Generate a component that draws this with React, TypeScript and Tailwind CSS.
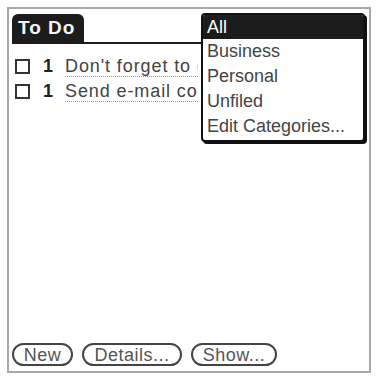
import React from 'react';

const todos = [
  { priority: 1, text: "Don't forget to call home" },
  { priority: 1, text: 'Send e-mail confirmation' },
];

const categories = ['Business', 'Personal', 'Unfiled', 'Edit Categories...'];

const App: React.FC = () => {
  return (
    <div
      className="relative w-[376px] h-[376px] bg-white pt-[7px] pl-[7px]"
      style={{ fontFamily: '"Liberation Sans", Arial, sans-serif' }}
    >
      <div className="w-[364px] h-[366px] border-2 border-[#a8a8a8] flex flex-col">
        {/* Title bar */}
        <div className="mt-[5px] ml-[3px] mr-[4px] flex items-end border-b-2 border-[#1c1c1c]">
          <div className="w-[72px] h-[28px] bg-[#1c1c1c] rounded-t-[6px] text-[#f4f4f4] text-[19px] font-bold pl-[6px] leading-[28px] tracking-[1px]">
            To Do
          </div>
        </div>

        {/* Rows */}
        <div className="mt-[10px] flex flex-col">
          {todos.map((t, i) => (
            <div key={i} className="flex items-center h-[25px] ml-[6px]">
              <div className="w-[15px] h-[15px] border-2 border-[#333] shrink-0" />
              <span className="ml-[13px] w-[12px] text-[18px] font-bold text-[#222]">{t.priority}</span>
              <span className="ml-[10px] w-[133px] overflow-hidden text-[18px] text-[#444] whitespace-nowrap border-b border-dotted border-[#999] leading-[20px] tracking-[0.9px]">
                {t.text}
              </span>
            </div>
          ))}
        </div>

        <div className="flex-1" />

        {/* Buttons */}
        <div className="flex items-center gap-[9px] ml-[3px] mb-[5px]">
          <button className="w-[61px] h-[23px] rounded-full border-2 border-[#444] text-[18px] text-[#555] leading-none tracking-[0.5px]">
            New
          </button>
          <button className="w-[100px] h-[23px] rounded-full border-2 border-[#444] text-[18px] text-[#555] leading-none tracking-[0.5px]">
            Details...
          </button>
          <button className="w-[86px] h-[23px] rounded-full border-2 border-[#444] text-[18px] text-[#555] leading-none tracking-[0.5px]">
            Show...
          </button>
        </div>
      </div>

      {/* Category popup */}
      <div className="absolute left-[201px] top-[13px] w-[164px] h-[129px] bg-white border-2 border-[#111] rounded-[4px] shadow-[2px_2px_0_#111] flex flex-col overflow-hidden">
        <div className="h-[24px] shrink-0 bg-[#1c1c1c] text-white text-[18px] pl-[4px] leading-[24px]">All</div>
        {categories.map((c) => (
          <div key={c} className="h-[25px] shrink-0 text-[18px] text-[#444] pl-[4px] leading-[25px] whitespace-nowrap">
            {c}
          </div>
        ))}
      </div>
    </div>
  );
};

export default App;
